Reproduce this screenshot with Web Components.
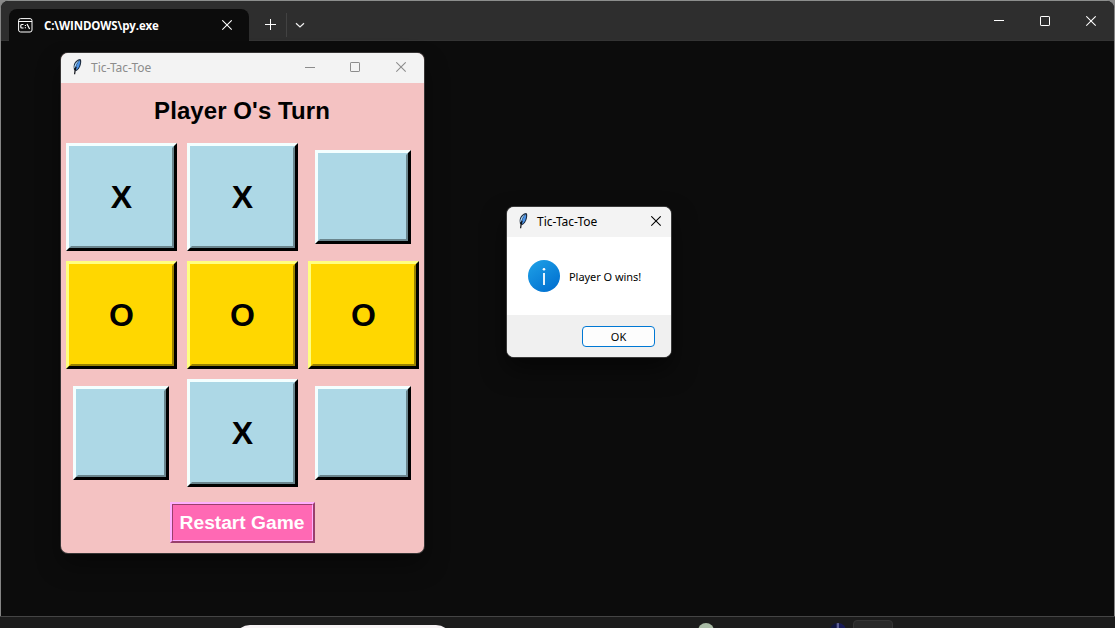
<!DOCTYPE html>
<html lang="en">
<head>
<meta charset="utf-8">
<title>Tic-Tac-Toe</title>
<style>
html,body{margin:0;height:100%;overflow:hidden;background:#8a8a8a;font-family:"Noto Sans","Open Sans",sans-serif}
</style>
</head>
<body>
<desktop-screen>
  <terminal-window>
    <tk-window></tk-window>
    <message-dialog></message-dialog>
  </terminal-window>
  <task-bar></task-bar>
</desktop-screen>
<script>
const define = (name, html) => customElements.define(name, class extends HTMLElement {
  constructor() {
    super();
    this.attachShadow({ mode: 'open' }).innerHTML = html;
  }
});

define('desktop-screen', `
<style>
:host{display:flex;flex-direction:column;width:1115px;height:628px;overflow:hidden}
</style><slot></slot>`);

define('feather-icon', `
<style>:host{display:block;width:12px;height:17px}svg{display:block}</style>
<svg width="12" height="17" viewBox="0 0 12 17">
  <path d="M9.300 .1 Q10.800 .9 9.900 5.300 Q8.800 10.100 5.400 11.900 L3 10.900 Q1.600 5.800 4.800 2.300 Q7.300 0 9.300 .1Z" fill="#1c2a3c"/>
  <path d="M8.900 1 Q9.700 4.300 8.200 7.500 Q6.800 10.300 4.800 11.100 Q4.600 5.300 8.900 1Z" fill="#4b93e8"/>
  <path d="M8.200 1.200 Q3 3.800 3.300 9.100 L4.200 8.900 Q5 4.800 8.200 1.200Z" fill="#a6d2f5"/>
  <path d="M5.200 7.800 Q3.900 10.800 3.600 15.300" fill="none" stroke="#0c0f16" stroke-width="1.2"/>
</svg>`);

define('win-glyph', `
<style>
:host{display:block;width:11px;height:11px}
svg{display:none}
:host([kind=min]) .min,:host([kind=max]) .max,:host([kind=close]) .close{display:block}
</style>
<svg class="min" width="11" height="11"><path d="M0 4.500H10" stroke="currentColor"/></svg>
<svg class="max" width="11" height="11"><rect x=".5" y=".5" width="9" height="9" rx=".6" fill="none" stroke="currentColor"/></svg>
<svg class="close" width="11" height="11"><path d="M.3 .3L9.700 9.700M9.700 .3L.3 9.700" stroke="currentColor" stroke-width="1.05"/></svg>`);

define('terminal-window', `
<style>
:host{display:flex;flex-direction:column;box-sizing:border-box;height:616px;border:1px solid #858585;border-top-color:#8c8e8d;border-bottom:0;border-radius:8px 8px 0 0;background:#0c0c0c;overflow:hidden;flex:none}
header{display:flex;height:40px;background:#2e2e2e;flex:none;color:#fff;box-shadow:inset 0 -1px #343434}
.tab{position:relative;display:flex;align-items:center;box-sizing:border-box;width:240px;margin:8px 0 0 8px;padding:0 16px 0 9px;background:#0c0c0c;border-radius:8px 8px 0 0;font:bold 11.500px "Open Sans",sans-serif}
.tab svg{display:block;margin-right:11px}
.tab span{flex:1;letter-spacing:-.12px}
.plus{margin:18px 0 0 16px;width:11px;height:11px}
.sep{width:1px;height:24px;margin:12px 0 0 10px;background:#424242}
.chev{margin:21px 0 0 8px}
.ctl{display:flex;gap:35px;margin:15px 17px 0 auto}
main{display:flex;align-items:flex-start;padding:12px 0 0 60px}
::slotted(message-dialog){margin:154px 0 0 83px}
</style>
<header>
  <div class="tab">
    <svg width="15" height="15" viewBox="0 0 15 15" fill="none" stroke="#fff"><rect x=".6" y=".6" width="13.400" height="13.400" rx="2"/><path d="M.5 3.500H14"/><path d="M5.500 6.500H3.800Q2.800 6.500 2.800 7.500V9Q2.800 10 3.800 10H5.500M7.400 7V8M7.400 9.200V10.200M9 6L11.600 11" stroke-width="1.200"/></svg>
    <span>C:\\WINDOWS\\py.exe</span>
    <win-glyph kind="close"></win-glyph>
  </div>
  <svg class="plus" viewBox="0 0 11 11"><path d="M0 5.500H11M5.500 0V11" stroke="#fff"/></svg>
  <div class="sep"></div>
  <svg class="chev" width="10" height="7" viewBox="0 0 10 7"><path d="M1 1.200L5 5L9 1.200" fill="none" stroke="#eee" stroke-width="1.200"/></svg>
  <div class="ctl"><win-glyph kind="min"></win-glyph><win-glyph kind="max"></win-glyph><win-glyph kind="close"></win-glyph></div>
</header>
<main><slot></slot></main>`);

define('board-cell', `
<style>
:host{display:grid;place-items:center;box-sizing:border-box;position:relative;width:96px;height:94px;margin-right:1px;border:3px solid;border-color:#f4ffff #000 #000 #f4ffff;background:#add8e6;color:#000;font:bold 32px "Liberation Sans",sans-serif;--dark:#6a858d}
:host([mark]){width:111px;height:108px;margin-right:0}
:host([win]){background:#ffd700;border-color:#ffff80 #000 #000 #ffff80;--dark:#998100}
:host::after{content:"";position:absolute;inset:0;border:2px solid;border-color:transparent var(--dark) var(--dark) transparent}
slot{display:block;line-height:36px}
</style><slot></slot>`);

define('tk-window', `
<style>
:host{display:flex;flex-direction:column;width:363px;height:500px;border-radius:7px;overflow:hidden;background:#f4c2c2;box-shadow:0 0 0 1px #373535,0 12px 24px #0006;color:#000;flex:none}
header{display:flex;align-items:center;height:30px;background:#f3f3f3;color:#8c8c8c;font-size:12px;flex:none;box-sizing:border-box;padding:0 17px 2px 10px}
header span{margin-left:8px}
.ctl{display:flex;gap:35px;margin-left:auto;padding-top:2px}
.ctl win-glyph[kind=min]{padding-top:1px;margin:0 -1px 0 1px}
h1{margin:12px 0 0;text-align:center;font:bold 24px/32px "Liberation Sans",sans-serif;letter-spacing:.08px;padding-right:1px}
.board{display:grid;grid-template-columns:repeat(3,111px);grid-auto-rows:108px;gap:10px;place-items:center;margin:16px 0 0 5px}
button{display:block;box-sizing:border-box;width:145px;height:41px;margin:15px 0 0 109px;padding:0;border:2px solid;border-color:#ffb0ff #993f6c #993f6c #ffb0ff;background:#ff69b4;flex:none}
button span{display:grid;place-items:center;box-sizing:border-box;height:37px;padding-right:1px;border:1px solid;border-color:#993f6c #ffb0ff #ffb0ff #993f6c;color:#fff;font:bold 19.200px "Liberation Sans",sans-serif}
</style>
<header><feather-icon></feather-icon><span>Tic-Tac-Toe</span><div class="ctl"><win-glyph kind="min"></win-glyph><win-glyph kind="max"></win-glyph><win-glyph kind="close"></win-glyph></div></header>
<h1>Player O's Turn</h1>
<div class="board">
  <board-cell mark>X</board-cell><board-cell mark>X</board-cell><board-cell></board-cell>
  <board-cell mark win>O</board-cell><board-cell mark win>O</board-cell><board-cell mark win>O</board-cell>
  <board-cell></board-cell><board-cell mark>X</board-cell><board-cell></board-cell>
</div>
<button><span>Restart Game</span></button>`);

define('message-dialog', `
<style>
:host{display:flex;flex-direction:column;width:164px;height:150px;border-radius:7px;overflow:hidden;background:#fff;color:#000;box-shadow:0 0 0 1px #3a3a3a,0 12px 24px #0008;flex:none}
header{display:flex;align-items:center;box-sizing:border-box;height:30px;padding:0 9px 2px 10px;background:#f3f3f3;font-size:12px}
header span{margin-left:8px;flex:1}
.body{display:flex;align-items:center;height:78px;padding-left:21px;font-size:11px}
.body span{margin-left:9px;letter-spacing:-.05px}
footer{display:flex;justify-content:flex-end;align-items:flex-start;height:31px;padding:11px 16px 0 0;background:#f0f0f0}
button{width:73px;height:21px;box-sizing:border-box;border:1px solid #0078d4;border-radius:4px;background:#fdfdfd;color:#000;font:11px "Noto Sans",sans-serif;padding:0}
</style>
<header><feather-icon></feather-icon><span>Tic-Tac-Toe</span><win-glyph kind="close"></win-glyph></header>
<div class="body">
<svg width="32" height="32" viewBox="0 0 32 32"><defs><linearGradient id="g" x1=".1" y1="0" x2=".8" y2="1"><stop stop-color="#1ea0e6"/><stop offset="1" stop-color="#006fd0"/></linearGradient></defs><circle cx="16" cy="16" r="16" fill="url(#g)"/><circle cx="16" cy="9.300" r="1.300" fill="#fff"/><path d="M16 13V25" stroke="#fff" stroke-width="1.800"/></svg>
<span>Player O wins!</span></div>
<footer><button>OK</button></footer>`);

define('task-bar', `
<style>
:host{display:flex;height:12px;box-sizing:border-box;border-top:1px solid #454545;background:#1c1c1c;overflow:hidden;align-items:flex-start}
.search{width:218px;height:32px;margin:8px 0 0 234px;border-radius:16px;background:#f7f3f5;flex:none}
.green{width:16px;height:16px;margin:6px 0 0 246px;border-radius:50%;background:#a9bba5;flex:none}
.blue{width:16px;height:16px;margin:6px 0 0 116px;border-radius:50%;background:linear-gradient(90deg,#10153f 40%,#5d5f95 42% 54%,#171a58 56%);flex:none}
.app{width:40px;height:40px;box-sizing:border-box;margin:3px 0 0 7px;border:1px solid #353535;border-radius:4px;background:#292929;flex:none}
</style>
<div class="search"></div><div class="green"></div><div class="blue"></div><div class="app"></div>`);
</script>
</body>
</html>
